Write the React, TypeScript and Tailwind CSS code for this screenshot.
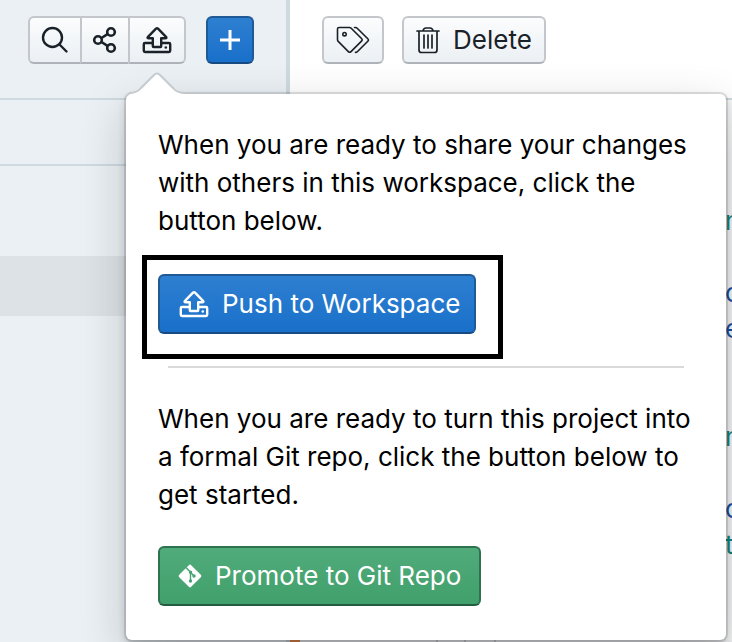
import { type ReactNode } from "react";

const plainButton =
  "flex h-12 items-center justify-center border-2 border-[#c3c7cb] border-b-[#adb3b9] bg-linear-to-b from-[#fbfcfd] to-[#ebf0f4] text-[#1a2129]";

function PushIcon({ className }: { className: string }) {
  return (
    <svg viewBox="0 0 32 28" className={className} fill="none" stroke="currentColor" strokeWidth="2.400" strokeLinejoin="round" aria-hidden="true">
      <path d="M11.500 17H4q-1.200 0-1.200 1.200v6.600q0 1.200 1.200 1.200h24q1.200 0 1.200-1.200v-6.600q0-1.200-1.200-1.200h-7.500" />
      <path d="M15 2.600 7 10.800q-1.200 1.500.800 1.500h4v7.900q0 .800.800.800h6.800q.800 0 .800-.800v-7.900h4q2 0 .800-1.500l-8-8.200q-1-.900-2 0Z" />
      <circle cx="24.800" cy="21.500" r="1.300" fill="currentColor" stroke="none" />
    </svg>
  );
}

function GitIcon() {
  return (
    <svg viewBox="0 0 24 24" className="size-6 shrink-0" aria-hidden="true">
      <path d="M10.800 1.200q1.200-1.200 2.400 0l9.600 9.600q1.200 1.200 0 2.400l-9.600 9.600q-1.200 1.200-2.400 0l-9.600-9.600q-1.200-1.200 0-2.400Z" fill="currentColor" />
      <g stroke="#47a474" strokeWidth="1.400" fill="#47a474">
        <path d="M8 3.600 16 12M12.500 8v9" fill="none" />
        <circle cx="12.500" cy="8.300" r="1" />
        <circle cx="16" cy="12" r="1" />
        <circle cx="12.500" cy="17" r="1" />
      </g>
    </svg>
  );
}

function Popover({ children }: { children: ReactNode }) {
  return (
    <div
      role="dialog"
      aria-label="Share changes"
      className="absolute top-[94px] left-[126px] z-10 w-[600px] rounded-md bg-white px-8 pt-8 pb-[34px] text-black shadow-[0_0_0_2px_rgba(16,22,26,0.12),0_4px_8px_rgba(16,22,26,0.2),0_16px_48px_rgba(16,22,26,0.2)]"
    >
      <svg viewBox="0 0 60 24" className="absolute -top-[22px] left-0 h-6 w-[60px]" aria-hidden="true">
        <path d="M4 22Q11 21 15 17L28 3Q31 0 34 3L47 17Q51 21 58 22V24H4Z" fill="#fff" />
        <path d="M3 21Q11 21 15 16L28 3Q31 0 34 3L47 16Q51 21 59 21" fill="none" stroke="#c5cbcf" strokeWidth="2" />
      </svg>
      {children}
    </div>
  );
}

const blueButton =
  "rounded-md border-2 border-[#1f5a96] border-b-[#174a80] bg-linear-to-b from-[#2d7fd0] to-[#1970ca] text-white";

export default function App() {
  return (
    <div className="flex h-screen overflow-hidden bg-white font-['Inter',sans-serif] text-[26px] leading-[38px]">
      <aside className="w-[290px] shrink-0 border-r-4 border-[#ced9e0] bg-[#ebf0f4]">
        <header className="flex h-[100px] gap-5 border-b-2 border-[#cfd9e0] pt-4 pl-7">
          <div className="flex">
            <button aria-label="Search" className={`${plainButton} w-[52px] rounded-l-md border-r-0`}>
              <svg viewBox="0 0 28 28" className="size-7" fill="none" stroke="currentColor" strokeWidth="2.400" strokeLinecap="round">
                <circle cx="11.500" cy="11.500" r="9.500" />
                <path d="m18.500 18.500 7 7" />
              </svg>
            </button>
            <button aria-label="Share" className={`${plainButton} w-12 border-r-0`}>
              <svg viewBox="0 0 26 28" className="h-7 w-[26px]" fill="none" stroke="currentColor" strokeWidth="2.600">
                <circle cx="6" cy="14" r="3.800" />
                <circle cx="19" cy="6" r="3.800" />
                <circle cx="19" cy="22" r="3.800" />
                <path d="m9.500 12 6-3.800M9.500 16l6 3.800" />
              </svg>
            </button>
            <button aria-label="Push" aria-expanded="true" className={`${plainButton} w-[58px] rounded-r-md`}>
              <PushIcon className="h-7 w-8" />
            </button>
          </div>
          <button aria-label="Add" className={`${blueButton} flex size-12 items-center justify-center`}>
            <svg viewBox="0 0 20 20" className="size-5" stroke="currentColor" strokeWidth="3">
              <path d="M10 0v20M0 10h20" />
            </svg>
          </button>
        </header>
        <div className="h-[66px] border-b-2 border-[#cfd9e0]" />
        <div className="mt-[90px] h-[60px] bg-[#dde2e6]" />
      </aside>

      <main className="flex min-w-0 grow flex-col">
        <header className="flex h-[100px] shrink-0 gap-[18px] border-b-2 border-[#ced9e0] pt-4 pl-8">
          <button aria-label="Tags" className={`${plainButton} w-[62px] rounded-md`}>
            <svg viewBox="0 0 34 28" className="h-7 w-[34px]" fill="none" stroke="currentColor" strokeWidth="1.600" strokeLinejoin="round" strokeLinecap="round">
              <path d="M3 1.500h10.500q1 0 1.700.700l10.300 10.300q1.300 1.300 0 2.600l-10.500 10.500q-1.300 1.300-2.600 0L2.200 15.400q-.700-.700-.700-1.700V3q0-1.500 1.500-1.500Z" />
              <path d="M18.500 1.500h1q1 0 1.700.700l10.600 10.600q1.200 1.200 0 2.400L21.300 25.700q-.700.700-1.800.700" />
              <circle cx="8.500" cy="8.200" r="1.700" />
            </svg>
          </button>
          <button className={`${plainButton} gap-[13px] rounded-md px-3`}>
            <svg viewBox="0 0 24 28" className="h-7 w-6" fill="none" stroke="currentColor" strokeWidth="1.700" strokeLinejoin="round" strokeLinecap="round" aria-hidden="true">
              <path d="M1 5h22M3 5v19q0 2.500 2.500 2.500h13q2.500 0 2.500-2.500V5M7 5q.500-3 3-3h4q2.500 0 3 3M8 9v13M12 9v13M16 9v13" />
            </svg>
            Delete
          </button>
        </header>
        <div className="flex grow justify-end overflow-hidden bg-[#f7f8f8]">
          <div className="w-[7px] pt-[103px] leading-9 whitespace-pre text-[#12857c]">
            <p className="mb-9">n</p>
            <p className="text-[#184f9e]">o</p>
            <p className="mb-[72px] text-[#184f9e]">e</p>
            <p className="mb-9">n</p>
            <p className="text-[#184f9e]">o</p>
            <p>t</p>
          </div>
        </div>
        <footer className="flex h-0.5 shrink-0 bg-[#f3f3f5]">
          <div className="w-[10px] bg-[#f08a45]" />
          <div className="w-[138px] border-r-2 border-[#cfcfd2]" />
          <div className="w-[28px] border-r-2 border-[#cfcfd2]" />
          <div className="w-[30px] border-r-2 border-[#cfcfd2]" />
        </footer>
      </main>

      <Popover>
        <p>When you are ready to share your changes with others in this workspace, click the button below.</p>
        <div className="-ml-4 mt-[15px] w-[361px] border-[5px] border-black px-[11px] pt-[14px] pb-5">
          <button className={`${blueButton} flex h-[60px] w-[318px] items-center gap-3 px-[18px] whitespace-nowrap`}>
            <PushIcon className="h-7 w-8 shrink-0" />
            Push to Workspace
          </button>
        </div>
        <hr className="mx-[10px] mt-[7px] mb-8 border-t-2 border-[#dadada]" />
        <p>When you are ready to turn this project into a formal Git repo, click the button below to get started.</p>
        <button className="mt-8 flex h-[60px] items-center gap-[13px] rounded-md border-2 border-[#2d7350] border-b-[#245c41] bg-linear-to-b from-[#51ab7b] to-[#40a06b] px-[18px] whitespace-nowrap text-white">
          <GitIcon />
          Promote to Git Repo
        </button>
      </Popover>
    </div>
  );
}
